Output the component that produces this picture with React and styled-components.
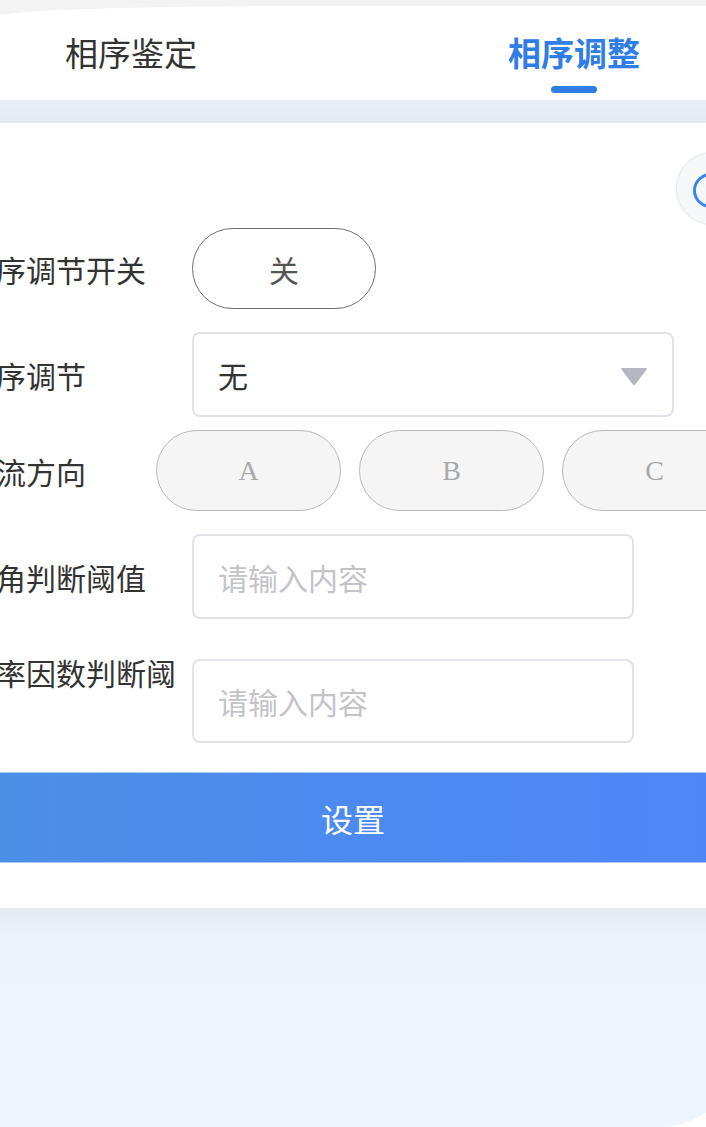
import React from "react";
import styled, { createGlobalStyle } from "styled-components";

const Global = createGlobalStyle`
  html, body { margin: 0; padding: 0; background: #ffffff; overflow: hidden; }
  #root { width: 706px; height: 1127px; overflow: hidden; }
  * { box-sizing: border-box; }
`;

const cjk = `"Noto Sans CJK SC", "Noto Sans", sans-serif`;

const Page = styled.div`
  width: 706px;
  height: 1127px;
  display: flex;
  flex-direction: column;
  font-family: ${cjk};
  background: #f3f3f3;
`;

const TabBar = styled.div`
  margin-top: 6px;
  background: #ffffff;
  border-top-left-radius: 300px 10px;
  display: flex;
  justify-content: space-between;
  padding: 26px 66px 7px 65px;
`;

const Tab = styled.div`
  display: flex;
  flex-direction: column;
  align-items: center;
  font-size: 33px;
  line-height: 40px;
  color: ${(p) => (p.$active ? "#2f7de6" : "#333333")};
  font-weight: ${(p) => (p.$active ? 700 : 400)};
`;

const Underline = styled.div`
  margin-top: 14px;
  width: 46px;
  height: 7px;
  border-radius: 4px;
  background: ${(p) => (p.$active ? "#2f7de6" : "transparent")};
`;

const Band = styled.div`
  height: 23px;
  background: linear-gradient(#e9eef8, #e3e8f3);
`;

const Card = styled.div`
  background: #ffffff;
  padding: 29px 0 45px 0;
  display: flex;
  flex-direction: column;
`;

const FloatRow = styled.div`
  display: flex;
  justify-content: flex-end;
  height: 73px;
`;

const Circle = styled.div`
  width: 73px;
  height: 73px;
  margin-right: -43px;
  border-radius: 50%;
  background: #f6f7f9;
  border: 1px solid #e6e8ec;
  display: flex;
  align-items: center;
  justify-content: center;
  box-shadow: 0 0 3px rgba(0, 0, 0, 0.06);
`;

const Ring = styled.div`
  width: 35px;
  height: 35px;
  border-radius: 50%;
  border: 3px solid #3b86e6;
  margin-left: -4px;
  margin-top: 4px;
`;

const Form = styled.div`
  margin-left: -34px;
  display: flex;
  flex-direction: column;
`;

const Row = styled.div`
  display: flex;
  align-items: ${(p) => (p.$top ? "flex-start" : "center")};
  margin-top: ${(p) => p.$mt}px;
`;

const Label = styled.div`
  flex: 0 0 ${(p) => p.$w}px;
  font-size: 30px;
  line-height: 40px;
  color: #333333;
  white-space: nowrap;
  overflow: hidden;
`;

const Toggle = styled.div`
  width: 184px;
  height: 81px;
  border: 1px solid #6f6f6f;
  border-radius: 41px;
  display: flex;
  align-items: center;
  justify-content: center;
  font-size: 30px;
  color: #555555;
`;

const Select = styled.div`
  width: 482px;
  height: 85px;
  border: 2px solid #e2e3e8;
  border-radius: 8px;
  display: flex;
  align-items: center;
  justify-content: space-between;
  padding: 0 24px 0 24px;
  font-size: 30px;
  color: #333333;
`;

const Caret = styled.svg`
  width: 28px;
  height: 20px;
  display: block;
  margin-top: 2px;
`;

const Pills = styled.div`
  display: flex;
  gap: 18px;
`;

const Pill = styled.div`
  flex: 0 0 185px;
  height: 81px;
  border: 1px solid #b9b9b9;
  border-radius: 41px;
  background: #f5f5f5;
  display: flex;
  align-items: center;
  justify-content: center;
  font-family: "Liberation Serif", "DejaVu Serif", serif;
  font-size: 28px;
  color: #a9a9a9;
`;

const Input = styled.div`
  width: 442px;
  height: ${(p) => p.$h}px;
  margin-top: ${(p) => p.$mt || 0}px;
  border: 2px solid #e2e3e8;
  border-radius: 8px;
  display: flex;
  align-items: center;
  padding-left: 24px;
  font-size: 30px;
  color: #c4c4c8;
`;

const SubmitButton = styled.div`
  margin: 29px -40px 0 -40px;
  height: 91px;
  background: linear-gradient(90deg, #4a90e5 0%, #4c8af0 50%, #4e86f8 100%);
  border-top: 1px solid #a9c8f4;
  border-bottom: 1px solid #a9c8f4;
  display: flex;
  align-items: center;
  justify-content: center;
  font-size: 32px;
  color: #ffffff;
`;

const BottomWrap = styled.div`
  flex: 1;
  background: #ffffff;
  display: flex;
`;

const Bottom = styled.div`
  flex: 1;
  margin-right: -34px;
  background: linear-gradient(180deg, #e6e9f2 0px, #edf2fb 30px, #eff5fd 100%);
  border-bottom-right-radius: 80px;
`;

export default function App() {
  return (
    <>
      <Global />
      <Page>
        <TabBar>
          <Tab>
            相序鉴定
            <Underline />
          </Tab>
          <Tab $active>
            相序调整
            <Underline $active />
          </Tab>
        </TabBar>
        <Band />
        <Card>
          <FloatRow>
            <Circle>
              <Ring />
            </Circle>
          </FloatRow>
          <Form>
            <Row $mt={3}>
              <Label $w={226}>相序调节开关</Label>
              <Toggle>关</Toggle>
            </Row>
            <Row $mt={23}>
              <Label $w={226}>相序调节</Label>
              <Select>
                <span>无</span>
                <Caret viewBox="0 0 28 20">
                  <path d="M2 2 H26 Q27.5 2 26.6 3.4 L15.2 18.4 Q14 19.8 12.8 18.4 L1.4 3.4 Q0.5 2 2 2 Z" fill="#b6b7c3" />
                </Caret>
              </Select>
            </Row>
            <Row $mt={13}>
              <Label $w={190}>电流方向</Label>
              <Pills>
                <Pill>A</Pill>
                <Pill>B</Pill>
                <Pill>C</Pill>
              </Pills>
            </Row>
            <Row $mt={23}>
              <Label $w={226}>相角判断阈值</Label>
              <Input $h={85}>请输入内容</Input>
            </Row>
            <Row $mt={33} $top>
              <Label $w={226}>功率因数判断阈</Label>
              <Input $h={84} $mt={7}>请输入内容</Input>
            </Row>
          </Form>
          <SubmitButton>设置</SubmitButton>
        </Card>
        <BottomWrap>
          <Bottom />
        </BottomWrap>
      </Page>
    </>
  );
}
